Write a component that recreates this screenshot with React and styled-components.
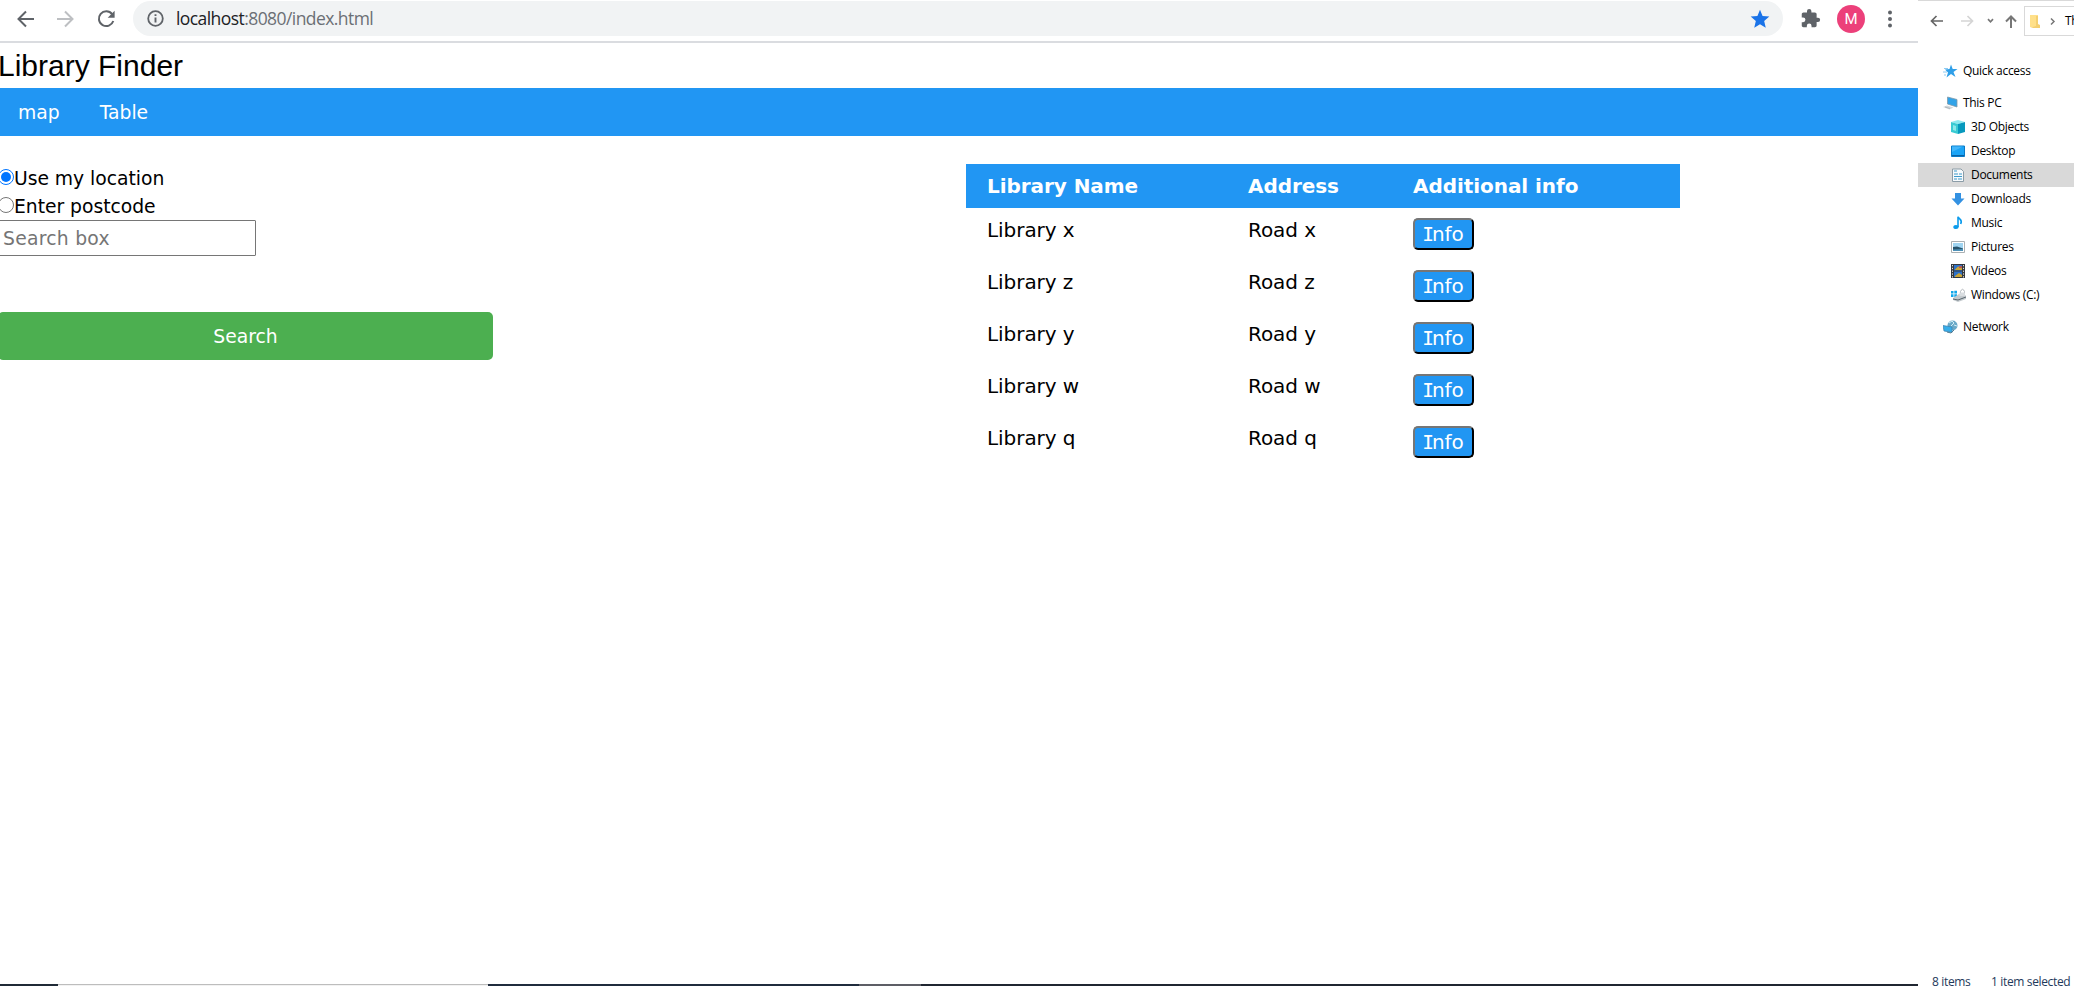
import React from "react";
import styled, { createGlobalStyle } from "styled-components";

const Global = createGlobalStyle`
  * { box-sizing: border-box; }
  html, body { margin: 0; padding: 0; background: #fff; overflow: hidden; }
  button, input { font: inherit; }
`;

const verdana = `Verdana, "DejaVu Sans", sans-serif`;
const segoe = `"Segoe UI", "Open Sans", "Noto Sans", sans-serif`;

const Screen = styled.div`
  display: flex;
  width: 2074px;
  height: 986px;
  overflow: hidden;
`;
const Browser = styled.section`
  display: flex;
  flex-direction: column;
  width: 1918px;
  height: 986px;
  overflow: hidden;
`;
const Toolbar = styled.header`
  display: flex;
  align-items: flex-start;
  height: 43px;
  padding: 1px 0 0 13px;
  border-bottom: 2px solid #dadce0;
  svg { display: block; flex: none; }
`;
const ToolButton = styled.span`
  display: flex;
  align-items: center;
  justify-content: center;
  width: ${(p) => p.$w || 40}px;
  height: 35px;
  flex: none;
`;
const UrlPill = styled.div`
  display: flex;
  align-items: center;
  flex: none;
  width: 1650px;
  height: 35px;
  padding: 0 13px 0 14px;
  border-radius: 18px;
  background: #f1f3f4;
`;
const Url = styled.span`
  flex: 1;
  margin-left: 12px;
  font: 17.5px/35px ${segoe};
  letter-spacing: -0.57px;
  color: #6b6f74;
  b { font-weight: 400; color: #202124; }
`;
const Avatar = styled.span`
  display: flex;
  align-items: center;
  justify-content: center;
  flex: none;
  width: 28px;
  height: 28px;
  margin-top: 4px;
  border-radius: 50%;
  background: #ec407a;
  color: #fff;
  font: 15px/28px Roboto, sans-serif;
`;

const Title = styled.h1`
  height: 45px;
  margin: 0 0 0 -2px;
  font: 400 30px/45px Arial, "Liberation Sans", sans-serif;
  color: #000;
`;
const Nav = styled.nav`
  display: flex;
  height: 48px;
  padding-left: 18px;
  gap: 40px;
  background: #2196f3;
  color: #fff;
  font: 18.75px/49px ${verdana};
`;
const Content = styled.main`
  display: flex;
  flex: 1;
  padding-top: 28px;
  font: 18.75px/28px ${verdana};
  color: #000;
`;
const Form = styled.form`
  display: flex;
  flex-direction: column;
  align-items: flex-start;
  width: 966px;
  margin-left: -2px;
`;
const Choice = styled.label`
  display: flex;
  align-items: center;
  height: 28px;
  letter-spacing: -0.03px;
`;
const Dot = styled.span`
  display: flex;
  align-items: center;
  justify-content: center;
  width: 16px;
  height: 16px;
  margin: 0 0 2px 0;
  border: 1px solid ${(p) => (p.$on ? "#0075ff" : "#767676")};
  border-radius: 50%;
  &::after {
    content: "";
    width: 10px;
    height: 10px;
    border-radius: 50%;
    background: ${(p) => (p.$on ? "#0075ff" : "transparent")};
  }
`;
const ChoiceText = styled.span`
  padding-top: 1px;
`;
const Input = styled.input`
  width: 258px;
  height: 36px;
  margin: 0;
  padding: 1px 0 0 4px;
  border: 1px solid #767676;
  border-radius: 1px;
  outline: 0;
  letter-spacing: 0.25px;
  &::placeholder { color: #757575; opacity: 1; }
`;
const SearchButton = styled.button`
  width: 495px;
  height: 48px;
  margin-top: 56px;
  padding: 1px 0 0;
  border: 0;
  border-radius: 5px;
  background: #4caf50;
  color: #fff;
`;
const Table = styled.div`
  width: 714px;
  margin-left: 2px;
  font-size: 20px;
  letter-spacing: -0.06px;
`;
const Row = styled.div`
  display: grid;
  grid-template-columns: 261px 165px 1fr;
  align-items: start;
  height: 52px;
  padding: 8px 20px 0 21px;
`;
const HeadRow = styled(Row)`
  height: 44px;
  background: #2196f3;
  color: #fff;
  font-weight: 700;
`;
const InfoButton = styled.button`
  display: flex;
  justify-content: center;
  width: 61px;
  height: 32px;
  margin-top: 2px;
  padding: 0;
  border: 2px outset #000;
  border-color: #767676 #212121 #212121 #767676;
  border-radius: 5px;
  background: #2196f3;
  color: #fff;
`;
/* The capital I takes the serifed form that Verdana gives it. */
const InfoLabel = styled.span`
  display: block;
  line-height: 29px;
  letter-spacing: -0.1px;
  &::first-letter {
    font-family: "DejaVu Sans Mono", monospace;
    font-size: 19.5px;
    letter-spacing: -2px;
    margin-left: -1px;
  }
`;
const TaskEdge = styled.footer`
  display: flex;
  height: 2px;
`;
const Segment = styled.i`
  flex: ${(p) => (p.$w ? `0 0 ${p.$w}px` : 1)};
  background: ${(p) => p.$c};
  border-top: ${(p) => (p.$top ? `1px solid ${p.$top}` : 0)};
`;

const Explorer = styled.aside`
  display: flex;
  flex-direction: column;
  width: 156px;
  height: 986px;
  border-top: 1px solid #d9d9d9;
  font: 12px/24px ${segoe};
  letter-spacing: -0.3px;
  color: #000;
  white-space: nowrap;
  overflow: hidden;
  svg { display: block; flex: none; }
`;
const ExplorerBar = styled.div`
  display: flex;
  height: 58px;
  padding-top: 5px;
`;
const Arrows = styled.div`
  width: 106px;
  padding-top: 7px;
`;
const AddressBox = styled.div`
  display: flex;
  align-items: center;
  width: 70px;
  flex: none;
  height: 30px;
  padding-left: 4px;
  border: 1px solid #d9d9d9;
  svg { margin-right: 9px; }
`;
const Item = styled.div`
  display: flex;
  align-items: center;
  flex: none;
  height: 24px;
  margin-top: ${(p) => p.$gap || 0}px;
  padding-left: ${(p) => (p.$root ? 25 : 33)}px;
  background: ${(p) => (p.$active ? "#d9d9d9" : "transparent")};
  svg { margin-right: 5px; }
`;
const Status = styled.div`
  display: flex;
  height: 16px;
  margin-top: auto;
  padding-left: 14px;
  letter-spacing: -0.35px;
  overflow: hidden;
  color: #1e395b;
`;
const StatusCell = styled.span`
  width: ${(p) => p.$w}px;
  flex: none;
  line-height: 23px;
`;
const Divider = styled.i`
  width: 1px;
  height: 12px;
  margin: 5px 11px 0 0;
  background: #ececec;
`;

const Arrow = ({ color, flip }) => (
  <svg width="20" height="20" viewBox="0 0 20 20" fill="none" stroke={color} strokeWidth="2">
    <path d={flip ? "M2 10H17M10 2.5L17.5 10L10 17.5" : "M18 10H3M10 2.5L2.5 10L10 17.5"} />
  </svg>
);
const Reload = () => (
  <svg width="20" height="20" viewBox="0 0 20 20">
    <path d="M16.1 5.1A7.4 7.4 0 1 0 17.3 12" fill="none" stroke="#5f6368" strokeWidth="2" />
    <path d="M18.6 1.8V8.7H11.7Z" fill="#5f6368" />
  </svg>
);
const InfoCircle = () => (
  <svg width="17" height="17" viewBox="0 0 17 17">
    <circle cx="8.5" cy="8.5" r="7.3" fill="none" stroke="#5f6368" strokeWidth="1.8" />
    <path d="M8.5 7.4V12.5M8.5 4.3V6.1" stroke="#5f6368" strokeWidth="1.9" />
  </svg>
);
const Star = () => (
  <svg width="20" height="20" viewBox="0 0 24 24">
    <path fill="#1a73e8" d="M12 18.2 18.9 22.4 17 14.4 23.2 9 15.1 8.3 12 .8 8.9 8.3.8 9 7 14.4 5.1 22.4Z" />
  </svg>
);
const Puzzle = () => (
  <svg width="21" height="21" viewBox="0 0 24 24">
    <path fill="#5f6368" d="M20.5 11H19V7c0-1.100-.9-2-2-2h-4V3.500a2.500 2.500 0 0 0-5 0V5H4c-1.100 0-2 .9-2 2v3.800h1.500a2.700 2.700 0 0 1 0 5.400H2V20c0 1.100.9 2 2 2h3.800v-1.500a2.700 2.700 0 0 1 5.400 0V22H17c1.100 0 2-.9 2-2v-4h1.500a2.500 2.500 0 0 0 0-5Z" />
  </svg>
);
const More = () => (
  <svg width="6" height="18" fill="#5f6368">
    <circle cx="3" cy="2.500" r="2" /><circle cx="3" cy="9" r="2" /><circle cx="3" cy="15.500" r="2" />
  </svg>
);
const ExplorerArrows = () => (
  <svg width="106" height="18" viewBox="0 0 106 18" fill="none" strokeWidth="1.700">
    <path stroke="#666" d="M25 8H14M18.500 3L13.500 8L18.500 13" />
    <path stroke="#d5d5d5" d="M43 8H54M49.500 3L54.500 8L49.500 13" />
    <path stroke="#777" d="M70 6.200L72.500 8.800L75 6.200" />
    <path stroke="#777" strokeWidth="2" d="M93 15V4M88 8.500L93 3.500L98 8.500" />
  </svg>
);

const icons = {
  quick: <><path d="M8 .5 9.700 5H14.500L10.500 8 12.500 13 8 10 3.500 13.500 5 8.500 2 5.500 6.500 5Z" fill="#2f9fe8" /><path d="M1 4.500H5M0 8H4M1 11H3" stroke="#8ccaf2" /></>,
  pc: <><path d="M4.500 1 14 3.500V11L4.500 8Z" fill="#31a3e8" stroke="#809baa" strokeWidth=".8" /><path d="M0 11 4 9.500 10.500 11.500 6.500 13.500Z" fill="#d3d7da" /><path d="M2 11 7 12.500" stroke="#9eaab2" strokeWidth=".7" /></>,
  cube: <><path d="M0 2 7 0 14 2 7 4Z" fill="#8deaf0" /><path d="M0 2 7 4V14L0 12Z" fill="#39cbd3" /><path d="M7 4 14 2V12L7 14Z" fill="#0799bd" /><path d="M2 5 5 6V11L2 10Z" fill="#8ce8e9" /></>,
  desktop: <><path d="M.5 2H13.500V12.500H.5Z" fill="#1ba4f6" stroke="#087ac7" /><path d="M1 11.500H13" stroke="#0a62a5" /><path d="M1 2.500H12L1 8Z" fill="#42b6fb" /></>,
  docs: <><path d="M1.500 1H10L12.500 3.500V13.500H1.500Z" fill="#f7fafc" stroke="#8b9ca7" /><path d="M3 3H6M3 6H7M8 6H11M3 8.500H11M3 11H6M7 11H11" stroke="#3c9acb" /></>,
  down: <path d="M4 1H10V6.500H13.500L7 13.500.5 6.500H4Z" fill="#3391e2" />,
  music: <><ellipse cx="5" cy="11" rx="2.700" ry="2.100" fill="#0b9bec" /><path d="M7 11V.8C8 3.500 12 3.500 9.700 8" fill="none" stroke="#0b9bec" strokeWidth="1.600" /></>,
  pics: <><path d="M.5 1.500H13.500V12.500H.5Z" fill="#fff" stroke="#aab0b3" /><path d="M2 3H12V11H2Z" fill="#9fd4f1" /><path d="M2 7 6 6.500 12 8.500V11H2Z" fill="#27536b" /><path d="M2 9.500 12 9V11H2Z" fill="#4d91b8" /></>,
  video: <><path d="M0 0H14V14H0Z" fill="#34383d" /><path d="M3 1H11V6.500H3ZM3 7.500H11V13H3Z" fill="#2e72c8" /><path d="M4 5.500 7 2.500 11 4V6H4ZM4 12 8 9 11 11V13H4Z" fill="#caa434" /><path d="M8 2H11V4H8Z" fill="#b45858" /><path d="M1.500 1V14M12.500 1V14" stroke="#ddd" strokeDasharray="1.300 1.500" /></>,
  drive: <><path d="M0 3H2.500V5.500H0ZM3.300 2.700H6V5.500H3.300ZM0 6.300H2.500V9H0ZM3.300 6.300H6V9H3.300Z" fill="#10a7ea" /><path d="M2 10 8 6 15 7.500V11L7 14 2 12Z" fill="#c4cace" /><path d="M2 11 7 12 15 9" stroke="#58656d" fill="none" /><path d="M9.500 6V3.500Q11.500-1 13.500 3.500V6" stroke="#b3b9bd" fill="none" /><path d="M8.500 4.500H14V8H8.500Z" fill="#d9dde0" /></>,
  net: <><circle cx="9.500" cy="5.500" r="5" fill="#6aa9c8" /><path d="M6 3 9 1 11 3 8 6M11 5 14 6" stroke="#d0edf5" fill="none" /><path d="M0 5.500 9 7V12.500L1 11Z" fill="#37aeea" stroke="#3c80ac" strokeWidth=".7" /><path d="M4 12 8 13 11 10" stroke="#547b91" fill="none" /></>,
};
const places = [
  ["quick", "Quick access", true, 0], ["pc", "This PC", true, 8], ["cube", "3D Objects"],
  ["desktop", "Desktop"], ["docs", "Documents"], ["down", "Downloads"], ["music", "Music"],
  ["pics", "Pictures"], ["video", "Videos"], ["drive", "Windows (C:)"], ["net", "Network", true, 8],
];

export default function App() {
  return (
    <Screen>
      <Global />
      <Browser>
        <Toolbar>
          <ToolButton $w={25}><Arrow color="#5f6368" /></ToolButton>
          <ToolButton $w={54}><Arrow color="#bdbfc2" flip /></ToolButton>
          <ToolButton $w={27}><Reload /></ToolButton>
          <ToolButton $w={14} />
          <UrlPill>
            <InfoCircle />
            <Url><b>localhost</b>:8080/index.html</Url>
            <Star />
          </UrlPill>
          <ToolButton $w={54}><Puzzle /></ToolButton>
          <Avatar>M</Avatar>
          <ToolButton $w={50}><More /></ToolButton>
        </Toolbar>
        <Title>Library Finder</Title>
        <Nav><span>map</span><span>Table</span></Nav>
        <Content>
          <Form>
            <Choice><Dot $on /><ChoiceText>Use my location</ChoiceText></Choice>
            <Choice><Dot /><ChoiceText>Enter postcode</ChoiceText></Choice>
            <Input placeholder="Search box" />
            <SearchButton type="button">Search</SearchButton>
          </Form>
          <Table>
            <HeadRow><span>Library Name</span><span>Address</span><span>Additional info</span></HeadRow>
            {["x", "z", "y", "w", "q"].map((n) => (
              <Row key={n}>
                <span>Library {n}</span>
                <span>Road {n}</span>
                <InfoButton><InfoLabel>Info</InfoLabel></InfoButton>
              </Row>
            ))}
          </Table>
        </Content>
        <TaskEdge>
          <Segment $w={58} $c="#202a36" />
          <Segment $w={430} $c="#f2f2f2" $top="#bdbdbd" />
          <Segment $w={371} $c="#202c3d" />
          <Segment $w={62} $c="#5d5e65" />
          <Segment $c="#202631" />
        </TaskEdge>
      </Browser>
      <Explorer>
        <ExplorerBar>
          <Arrows><ExplorerArrows /></Arrows>
          <AddressBox>
            <svg width="12" height="15" viewBox="0 0 12 15"><path d="M1 1H9V13H1Z" fill="#ffe08a" /><path d="M7 2H9V10L11 11V14H1L7 12Z" fill="#f4cf70" /></svg>
            <svg width="6" height="9" fill="none" stroke="#777" strokeWidth="1.500"><path d="M1 1.500 4 4.500 1 7.500" /></svg>
            This PC
          </AddressBox>
        </ExplorerBar>
        {places.map(([icon, label, root, gap]) => (
          <Item key={icon} $root={root} $gap={gap} $active={icon === "docs"}>
            <svg width="15" height="15" viewBox="0 0 15 15">{icons[icon]}</svg>
            {label}
          </Item>
        ))}
        <Status>
          <StatusCell $w={48}>8 items</StatusCell>
          <Divider />
          <StatusCell $w={84}>1 item selected</StatusCell>
        </Status>
      </Explorer>
    </Screen>
  );
}
